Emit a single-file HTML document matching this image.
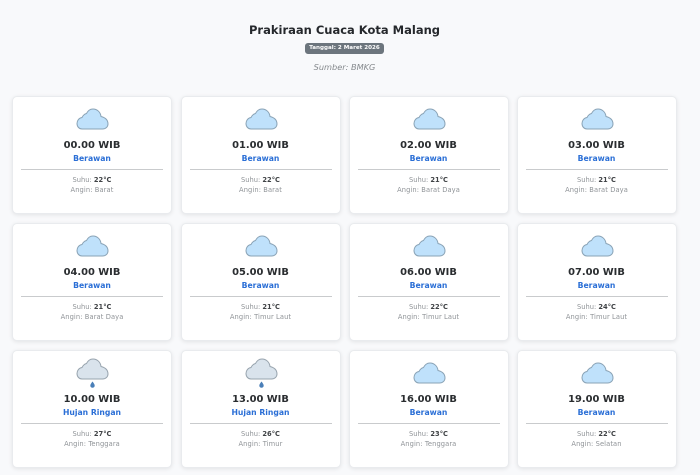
<!DOCTYPE html>
<html lang="id"><head><meta charset="utf-8"><title>Prakiraan Cuaca Kota Malang</title>
<style>
*{box-sizing:border-box}
html,body{margin:0;padding:0}
html{background:#f8f9fb}
body{width:700px;height:475px;overflow:hidden;background:#f8f9fb;font-family:"DejaVu Sans","Liberation Sans",sans-serif;position:relative;color:#212529;filter:blur(.3px)}
.t{position:absolute;left:0;width:689px;text-align:center;white-space:nowrap}
h1{margin:0;font-size:11.500px;font-weight:700;top:23px;line-height:15px;color:#25282c}
.badge{position:absolute;left:305px;top:42.500px;width:79px;height:11px;border-radius:3px;background:#6c757d;color:#fff;font-size:5.600px;font-weight:700;line-height:11px;text-align:center;white-space:nowrap}
.src{top:61px;font-size:8.200px;line-height:12px;font-style:italic;color:#85898d}
.c{position:absolute;width:160px;height:118px;background:#fff;border:1px solid #e9ebee;border-radius:5px;box-shadow:0 1px 4px rgba(0,0,0,.09);text-align:center;white-space:nowrap}
.c svg{position:absolute;left:63px;top:11px}
.c svg.r{top:7px}
.h{position:absolute;left:0;right:0;top:42px;font-size:9.900px;font-weight:700;line-height:14px;color:#2a2d30}
.d{position:absolute;left:0;right:0;top:55.500px;font-size:7.700px;font-weight:700;line-height:12px;color:#2b6fd6}
.l{position:absolute;left:8px;right:8px;top:72px;height:1px;background:#c9cbcd}
.s,.a{position:absolute;left:0;right:0;font-size:6.700px;line-height:10px;color:#8f9397}
.s{top:77.500px}.a{top:87.500px;letter-spacing:.1px}
.s b{color:#3f4245}
</style></head><body>
<svg width="0" height="0" style="position:absolute"><defs>
<symbol id="cl" viewBox="0 0 33 24"><path d="M6 21C3 21 1 18.500 1 15.500 1 12.500 3 10 6 9.500 7 7.500 8.500 6 10.500 5.500 12 2.500 14.500 1 17 1c4 0 7.500 3 8 7.500 4 1 7 3.500 7 7.500 0 3-2.500 5-5.500 5Z" fill="#bfe1fb" stroke="#8aa3b6" stroke-width="1"/></symbol>
<symbol id="rn" viewBox="0 0 33 32"><path d="M6 21C3 21 1 18.500 1 15.500 1 12.500 3 10 6 9.500 7 7.500 8.500 6 10.500 5.500 12 2.500 14.500 1 17 1c4 0 7.500 3 8 7.500 4 1 7 3.500 7 7.500 0 3-2.500 5-5.500 5Z" fill="#d9e3ec" stroke="#98a4ae" stroke-width="1"/><path d="M16.500 23.500c1.200 1.600 2.200 2.900 2.200 4.100a2.200 2.200 0 0 1-4.400 0c0-1.200 1-2.500 2.200-4.100Z" fill="#4a7fb8"/></symbol>
</defs></svg>
<h1 class="t">Prakiraan Cuaca Kota Malang</h1>
<div class="badge">Tanggal: 2 Maret 2026</div>
<div class="t src">Sumber: BMKG</div>

<div class="c" style="left:12px;top:96px"><svg width="33" height="24"><use href="#cl"/></svg><div class="h">00.00 WIB</div><div class="d">Berawan</div><div class="l"></div><div class="s">Suhu: <b>22°C</b></div><div class="a">Angin: Barat</div></div>
<div class="c" style="left:180.500px;top:96px"><svg width="33" height="24"><use href="#cl"/></svg><div class="h">01.00 WIB</div><div class="d">Berawan</div><div class="l"></div><div class="s">Suhu: <b>22°C</b></div><div class="a">Angin: Barat</div></div>
<div class="c" style="left:348.500px;top:96px"><svg width="33" height="24"><use href="#cl"/></svg><div class="h">02.00 WIB</div><div class="d">Berawan</div><div class="l"></div><div class="s">Suhu: <b>21°C</b></div><div class="a">Angin: Barat Daya</div></div>
<div class="c" style="left:516.500px;top:96px"><svg width="33" height="24"><use href="#cl"/></svg><div class="h">03.00 WIB</div><div class="d">Berawan</div><div class="l"></div><div class="s">Suhu: <b>21°C</b></div><div class="a">Angin: Barat Daya</div></div>

<div class="c" style="left:12px;top:223px"><svg width="33" height="24"><use href="#cl"/></svg><div class="h">04.00 WIB</div><div class="d">Berawan</div><div class="l"></div><div class="s">Suhu: <b>21°C</b></div><div class="a">Angin: Barat Daya</div></div>
<div class="c" style="left:180.500px;top:223px"><svg width="33" height="24"><use href="#cl"/></svg><div class="h">05.00 WIB</div><div class="d">Berawan</div><div class="l"></div><div class="s">Suhu: <b>21°C</b></div><div class="a">Angin: Timur Laut</div></div>
<div class="c" style="left:348.500px;top:223px"><svg width="33" height="24"><use href="#cl"/></svg><div class="h">06.00 WIB</div><div class="d">Berawan</div><div class="l"></div><div class="s">Suhu: <b>22°C</b></div><div class="a">Angin: Timur Laut</div></div>
<div class="c" style="left:516.500px;top:223px"><svg width="33" height="24"><use href="#cl"/></svg><div class="h">07.00 WIB</div><div class="d">Berawan</div><div class="l"></div><div class="s">Suhu: <b>24°C</b></div><div class="a">Angin: Timur Laut</div></div>

<div class="c" style="left:12px;top:350px"><svg class="r" width="33" height="32"><use href="#rn"/></svg><div class="h">10.00 WIB</div><div class="d">Hujan Ringan</div><div class="l"></div><div class="s">Suhu: <b>27°C</b></div><div class="a">Angin: Tenggara</div></div>
<div class="c" style="left:180.500px;top:350px"><svg class="r" width="33" height="32"><use href="#rn"/></svg><div class="h">13.00 WIB</div><div class="d">Hujan Ringan</div><div class="l"></div><div class="s">Suhu: <b>26°C</b></div><div class="a">Angin: Timur</div></div>
<div class="c" style="left:348.500px;top:350px"><svg width="33" height="24"><use href="#cl"/></svg><div class="h">16.00 WIB</div><div class="d">Berawan</div><div class="l"></div><div class="s">Suhu: <b>23°C</b></div><div class="a">Angin: Tenggara</div></div>
<div class="c" style="left:516.500px;top:350px"><svg width="33" height="24"><use href="#cl"/></svg><div class="h">19.00 WIB</div><div class="d">Berawan</div><div class="l"></div><div class="s">Suhu: <b>22°C</b></div><div class="a">Angin: Selatan</div></div>
</body></html>
